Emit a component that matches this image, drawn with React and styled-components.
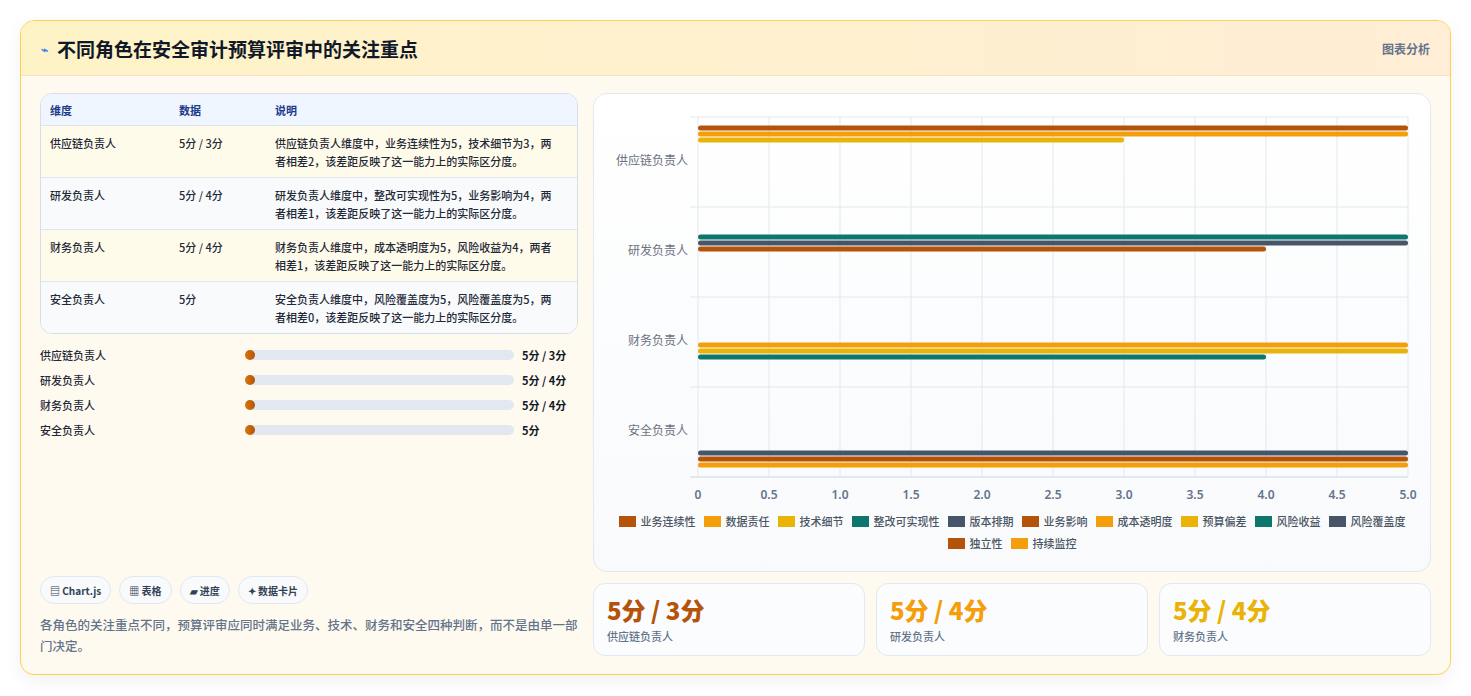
import React from "react";
import styled, { createGlobalStyle } from "styled-components";

const Global = createGlobalStyle`
  body { margin: 0; background: #fff; font-family: "Noto Sans CJK SC", "Noto Sans", sans-serif; }
`;

const C = { dk: "#b45309", or: "#f59e0b", ye: "#eab308", te: "#0f766e", sl: "#475569" };

const rows = [
  { name: "供应链负责人", val: "5分 / 3分", desc: "供应链负责人维度中，业务连续性为5，技术细节为3，两者相差2，该差距反映了这一能力上的实际区分度。" },
  { name: "研发负责人", val: "5分 / 4分", desc: "研发负责人维度中，整改可实现性为5，业务影响为4，两者相差1，该差距反映了这一能力上的实际区分度。" },
  { name: "财务负责人", val: "5分 / 4分", desc: "财务负责人维度中，成本透明度为5，风险收益为4，两者相差1，该差距反映了这一能力上的实际区分度。" },
  { name: "安全负责人", val: "5分", desc: "安全负责人维度中，风险覆盖度为5，风险覆盖度为5，两者相差0，该差距反映了这一能力上的实际区分度。" },
];

const bars = [
  [127, 5, C.dk], [133, 5, C.or], [139, 3, C.ye],
  [236, 5, C.te], [242, 5, C.sl], [248, 4, C.dk],
  [344, 5, C.or], [350, 5, C.ye], [356, 4, C.te],
  [452, 5, C.sl], [458, 5, C.dk], [464, 5, C.or],
];

const legend = [
  ["业务连续性", C.dk], ["数据责任", C.or], ["技术细节", C.ye], ["整改可实现性", C.te], ["版本排期", C.sl],
  ["业务影响", C.dk], ["成本透明度", C.or], ["预算偏差", C.ye], ["风险收益", C.te],
  ["风险覆盖度", C.sl], ["独立性", C.dk], ["持续监控", C.or],
];

const Page = styled.div`padding: 20px 20px 20px 20px;`;
const Card = styled.div`
  border: 1px solid #fcd34d; border-radius: 14px; overflow: hidden;
  background: #fffaf0; box-shadow: 0 6px 18px rgba(0,0,0,0.06);
`;
const Header = styled.div`
  height: 54px; display: flex; align-items: center; justify-content: space-between;
  padding: 0 20px; background: linear-gradient(90deg, #fef3c7, #ffedd5);
  border-bottom: 1px solid #f3e3c3;
`;
const Title = styled.h1`
  margin: 0; font-size: 19px; font-weight: 700; color: #111827; display: flex; align-items: center; gap: 9px;
`;
const Icon = styled.span`color: #3b82f6; font-size: 12px;`;
const Tag = styled.span`font-size: 12px; font-weight: 700; color: #64748b;`;
const Body = styled.div`display: flex; gap: 15px; padding: 17px 19px 18px 19px;`;
const Left = styled.div`width: 538px; display: flex; flex-direction: column;`;
const Right = styled.div`flex: 1; display: flex; flex-direction: column; gap: 11px;`;
const Table = styled.div`border: 1px solid #d7dee8; border-radius: 12px; overflow: hidden;`;
const Row = styled.div`
  display: grid; grid-template-columns: 129px 96px 1fr; padding: 0 9px;
  background: ${p => p.$head ? "#eff6ff" : p.$alt ? "#f8fafc" : "#fffbeb"};
  min-height: ${p => p.$head ? "31px" : "52px"};
  align-items: ${p => p.$head ? "center" : "start"};
  padding-top: ${p => p.$head ? "0" : "8px"};
  box-sizing: border-box;
  border-top: ${p => p.$head ? "none" : "1px solid #dfe5ee"};
  font-size: 11px; line-height: 18px; font-weight: ${p => p.$head ? 700 : 500};
  color: ${p => p.$head ? "#1e3a8a" : "#1f2937"};
`;
const Cell = styled.div`padding-right: 6px;`;
const Progress = styled.div`display: flex; flex-direction: column; gap: 7px; margin-top: 12px;`;
const PRow = styled.div`display: grid; grid-template-columns: 197px 269px 1fr; align-items: center; gap: 0 8px; font-size: 11px; font-weight: 500; color: #1f2937; height: 18px;`;
const Track = styled.div`height: 10px; border-radius: 5px; background: #e2e8f0; position: relative;`;
const Dot = styled.div`position: absolute; left: 0; top: 0; width: 10px; height: 10px; border-radius: 50%; background: linear-gradient(90deg, #d97706, #b45309);`;
const PVal = styled.span`font-weight: 700; color: #111827;`;
const Pills = styled.div`display: flex; gap: 8px; margin-top: auto;`;
const Pill = styled.span`
  border: 1px solid #e2e8f0; border-radius: 14px; background: #f8fafc; padding: 0 9px;
  height: 26px; display: flex; align-items: center; font-size: 10px; font-weight: 700; color: #334155;
`;
const Note = styled.p`margin: 10px 0 0; font-size: 12.5px; line-height: 21px; font-weight: 500; color: #64748b;`;
const Panel = styled.div`
  height: 479px; border: 1px solid #e2e8f0; border-radius: 14px; position: relative;
  background: linear-gradient(180deg, #ffffff, #f8fafc); box-sizing: border-box;
`;
const Legend = styled.div`
  position: absolute; left: 20px; right: 20px; top: 419px; display: flex; flex-wrap: wrap;
  justify-content: center; gap: 6px 8px; font-size: 11px; color: #4b5563; font-weight: 500;
`;
const LItem = styled.span`display: flex; align-items: center; gap: 5px;`;
const Swatch = styled.i`width: 17px; height: 11px; background: ${p => p.$c}; display: inline-block;`;
const Stats = styled.div`display: grid; grid-template-columns: repeat(3, 1fr); gap: 11px;`;
const Stat = styled.div`
  height: 73px; border: 1px solid #e2e8f0; border-radius: 12px; background: #fbfcfe;
  padding: 10px 13px; box-sizing: border-box;
`;
const Big = styled.div`font-size: 24px; font-weight: 800; color: ${p => p.$c}; line-height: 32px;`;
const Small = styled.div`font-size: 11px; color: #64748b; font-weight: 500; margin-top: 2px;`;

const X0 = 104, XW = 710, Y0 = 23, YH = 360;

function Chart() {
  const ticks = [0, 0.5, 1, 1.5, 2, 2.5, 3, 3.5, 4, 4.5, 5];
  const cats = ["供应链负责人", "研发负责人", "财务负责人", "安全负责人"];
  return (
    <svg width="839" height="420" style={{ position: "absolute", left: 0, top: 0 }}>
      {ticks.map((t, i) => {
        const x = X0 + (XW * t) / 5;
        return (
          <g key={i}>
            <line x1={x} y1={Y0} x2={x} y2={Y0 + YH} stroke="#e3e8ee" />
            <text x={x} y={Y0 + YH + 22} textAnchor="middle" fontSize="12" fontWeight="600" fill="#64748b" fontFamily="Noto Sans, sans-serif">{t === 0 || t % 1 ? t : t.toFixed(1)}</text>
          </g>
        );
      })}
      {[0, 1, 2, 3, 4].map(i => (
        <line key={i} x1={X0 - 8} x2={X0 + XW} y1={Y0 + i * 90} y2={Y0 + i * 90} stroke={i === 4 ? "#cbd5e1" : "#e3e8ee"} />
      ))}
      {cats.map((c, i) => (
        <text key={c} x={X0 - 10} y={Y0 + i * 90 + 48} textAnchor="end" fontSize="12" fill="#6b7280" fontFamily="Noto Sans CJK SC, sans-serif">{c}</text>
      ))}
      {bars.map(([y, v, col], i) => (
        <rect key={i} x={X0} y={y - 93 - 2.5} width={(XW * v) / 5} height="5" rx="2.5" fill={col} />
      ))}
    </svg>
  );
}

export default function App() {
  return (
    <Page>
      <Global />
      <Card>
        <Header>
          <Title><Icon>⌁</Icon>不同角色在安全审计预算评审中的关注重点</Title>
          <Tag>图表分析</Tag>
        </Header>
        <Body>
          <Left>
            <Table>
              <Row $head><Cell>维度</Cell><Cell>数据</Cell><Cell>说明</Cell></Row>
              {rows.map((r, i) => (
                <Row key={r.name} $alt={i % 2 === 1}><Cell>{r.name}</Cell><Cell>{r.val}</Cell><Cell>{r.desc}</Cell></Row>
              ))}
            </Table>
            <Progress>
              {rows.map(r => (
                <PRow key={r.name}><span>{r.name}</span><Track><Dot /></Track><PVal>{r.val}</PVal></PRow>
              ))}
            </Progress>
            <Pills>
              <Pill>▤ Chart.js</Pill><Pill>▦ 表格</Pill><Pill>▰ 进度</Pill><Pill>✦ 数据卡片</Pill>
            </Pills>
            <Note>各角色的关注重点不同，预算评审应同时满足业务、技术、财务和安全四种判断，而不是由单一部门决定。</Note>
          </Left>
          <Right>
            <Panel>
              <Chart />
              <Legend>
                {legend.map(([n, c]) => <LItem key={n}><Swatch $c={c} />{n}</LItem>)}
              </Legend>
            </Panel>
            <Stats>
              <Stat><Big $c={C.dk}>5分 / 3分</Big><Small>供应链负责人</Small></Stat>
              <Stat><Big $c={C.or}>5分 / 4分</Big><Small>研发负责人</Small></Stat>
              <Stat><Big $c={C.ye}>5分 / 4分</Big><Small>财务负责人</Small></Stat>
            </Stats>
          </Right>
        </Body>
      </Card>
    </Page>
  );
}
